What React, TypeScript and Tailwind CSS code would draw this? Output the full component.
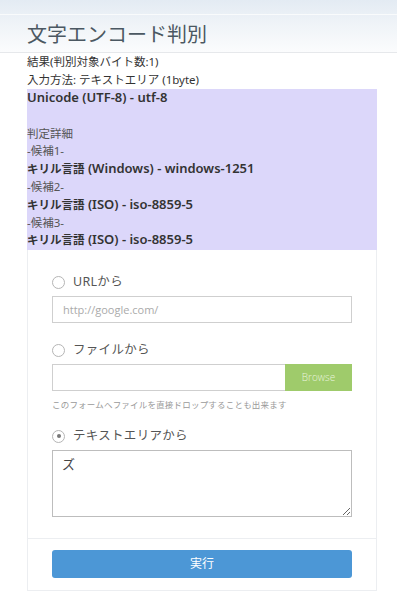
import React from 'react';

const font = { fontFamily: '"Noto Sans", "Noto Sans CJK JP", sans-serif' };
const openSans = { fontFamily: '"Open Sans", "Noto Sans CJK JP", sans-serif' };

function Radio({ checked }: { checked?: boolean }) {
  return (
    <span className="w-[13px] h-[13px] rounded-full border border-[#b5b5b5] bg-white flex items-center justify-center shrink-0">
      {checked && <span className="w-[4px] h-[4px] rounded-full bg-[#777]" />}
    </span>
  );
}

function RadioRow({ label, checked }: { label: string; checked?: boolean }) {
  return (
    <label className="flex items-center gap-[8px] h-[20px]">
      <Radio checked={checked} />
      <span className="text-[12.5px] text-[#555] tracking-[0.3px]">{label}</span>
    </label>
  );
}

export default function App() {
  const candidates = [
    { label: '-候補1-', jp: 'キリル言語', value: ' (Windows) - windows-1251' },
    { label: '-候補2-', jp: 'キリル言語', value: ' (ISO) - iso-8859-5' },
    { label: '-候補3-', jp: 'キリル言語', value: ' (ISO) - iso-8859-5' },
  ];

  return (
    <div className="w-[397px] h-[596px] bg-white overflow-hidden" style={font}>
      {/* Header */}
      <div className="h-[53px] bg-gradient-to-b from-[#e3ebf3] via-[#f0f4f8] to-[#fbfcfd] border-b border-[#e6e8eb] pl-[27px] pt-[14px]">
        <div className="border-t border-white/70 -ml-[27px] pl-[27px] pt-[6px]">
          <h1 className="text-[20px] leading-[26px] text-[#4b5862] font-normal" style={{ fontFamily: '"Noto Sans CJK JP", serif' }}>
            文字エンコード判別
          </h1>
        </div>
      </div>

      <div className="pl-[27px] pr-[20px]">
        {/* Result */}
        <p className="text-[11.5px] leading-[18px] text-[#333]">結果(判別対象バイト数:1)</p>
        <p className="text-[11.5px] leading-[17px] text-[#333]">入力方法: テキストエリア (1byte)</p>

        <div className="bg-[#dcd7fa] mt-[1px] text-[#333] leading-[17.8px] pb-[1px]">
          <p className="text-[13px] font-semibold">Unicode (UTF-8) - utf-8</p>
          <p className="text-[12px]">&nbsp;</p>
          <p className="text-[11.5px] text-[#555]">判定詳細</p>
          {candidates.map((c, i) => (
            <div key={i}>
              <p className="text-[11.5px] text-[#555]">{c.label}</p>
              <p className="text-[13px] font-semibold">
                <span className="text-[11.5px]">{c.jp}</span>
                {c.value}
              </p>
            </div>
          ))}
        </div>

        {/* Form card */}
        <div className="border border-t-0 border-[#eceef1]">
          <div className="px-[24px] pt-[22px] pb-[21px] flex flex-col">
            <RadioRow label="URLから" />
            <input
              className="mt-[4px] h-[27px] border border-[#cfcfcf] px-[10px] text-[11px] text-[#555] placeholder:text-[#aaa] outline-none"
              placeholder="http://google.com/"
              style={openSans}
            />

            <div className="mt-[17px]">
              <RadioRow label="ファイルから" />
            </div>
            <div className="mt-[4px] h-[27px] flex border border-[#cfcfcf]">
              <div className="flex-1 bg-white" />
              <button className="w-[67px] -my-px -mr-px bg-[#9fcb6b] text-[#e8f3dc] text-[10px] font-light" style={openSans}>
                Browse
              </button>
            </div>
            <p className="mt-[7px] text-[8.5px] leading-[14px] text-[#9a9a9a] tracking-[0.2px]">
              このフォームへファイルを直接ドロップすることも出来ます
            </p>

            <div className="mt-[14px]">
              <RadioRow label="テキストエリアから" checked />
            </div>
            <textarea
              className="mt-[4px] h-[67px] border border-[#bdbdbd] px-[9px] py-[4px] text-[13px] text-[#444] outline-none resize-y"
              defaultValue="ズ"
              style={font}
            />
          </div>
          <div className="border-t border-[#eceef1] px-[24px] pt-[11px] pb-[12px]">
            <button className="w-full h-[28px] rounded-[3px] bg-[#4c97d6] text-white text-[12px]">実行</button>
          </div>
        </div>
      </div>
    </div>
  );
}
